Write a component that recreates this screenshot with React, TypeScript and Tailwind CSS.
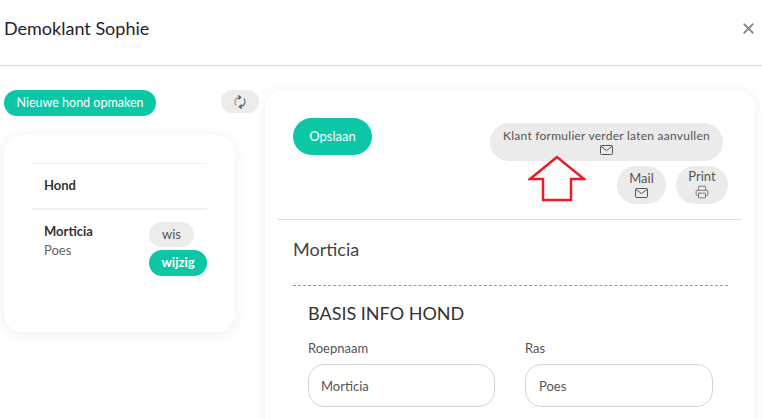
import React from 'react';
import { X, Printer } from 'lucide-react';

const MailIcon: React.FC = () => (
  <svg width="13" height="10" viewBox="0 0 13 10" fill="none" stroke="#555" strokeWidth="1" className="mt-[2px]">
    <rect x="0.5" y="0.5" width="12" height="9" rx="1" />
    <path d="M0.8 1.2 L6.5 5.6 L12.2 1.2" />
  </svg>
);

const SyncIcon: React.FC = () => (
  <svg width="12" height="14" viewBox="0 0 12 14" fill="none" strokeWidth="1.2">
    <path d="M2.2 10.4 A5 5 0 0 1 4.6 2.4" stroke="#c8893f" />
    <path d="M9.8 3.6 A5 5 0 0 1 7.4 11.6" stroke="#4a6ea8" />
    <path d="M4.2 0.6 L6.6 2.2 L4.4 4.2" stroke="#33415c" />
    <path d="M7.8 9.8 L5.4 11.8 L7.6 13.4" stroke="#33415c" />
  </svg>
);

const App: React.FC = () => {
  return (
    <div className="relative w-[762px] h-[419px] overflow-hidden bg-white font-['Lato','Noto_Sans',sans-serif] text-[#333]">
      <header className="h-[66px] border-b border-[#d9d9d9] flex items-center justify-between pl-[4px] pr-[5px]">
        <h1 className="text-[18px] text-[#1f2233] relative top-[-4px]">Demoklant Sophie</h1>
        <X className="w-[17px] h-[17px] text-[#8a8a8a] relative top-[-4px]" strokeWidth={2.5} />
      </header>

      <div className="flex pt-[24px] pl-[4px]">
        {/* linker kolom */}
        <div className="w-[255px] shrink-0">
          <div className="flex items-start justify-between">
            <button className="w-[152px] h-[26px] rounded-full bg-[#0cc7a6] text-white text-[12.5px]">Nieuwe hond opmaken</button>
            <button className="w-[38px] h-[23px] rounded-full bg-[#ececec] flex items-center justify-center">
              <SyncIcon />
            </button>
          </div>

          <div className="mt-[19px] w-[231px] h-[197px] rounded-[18px] bg-white shadow-[0_2px_14px_rgba(0,0,0,0.07)] px-[28px] pt-[28px]">
            <div className="border-t border-[#f0f0f0] h-[45px] pl-[12px] flex items-center">
              <span className="text-[13px] font-bold text-[#333]">Hond</span>
            </div>
            <div className="border-t-2 border-[#f0f0f0] flex justify-between pl-[12px] pt-[12px]">
              <div className="text-[13px] leading-[19px]">
                <div className="font-bold text-[#333]">Morticia</div>
                <div className="text-[#666]">Poes</div>
              </div>
              <div className="flex flex-col items-start w-[58px] gap-[3px]">
                <button className="w-[45px] h-[25px] rounded-full bg-[#ececec] text-[13px] text-[#555]">wis</button>
                <button className="w-[58px] h-[26px] rounded-full bg-[#0cc7a6] text-[13px] font-bold text-white">wijzig</button>
              </div>
            </div>
          </div>
        </div>

        {/* rechter kaart */}
        <div className="relative flex-1 ml-[6px] mr-[7px] h-[340px] rounded-t-[18px] bg-white shadow-[0_2px_14px_rgba(0,0,0,0.07)] px-[13px] pt-[28px]">
          <div className="h-[102px] border-b border-[#dedede] flex justify-between pl-[15px] pr-[14px]">
            <button className="w-[79px] h-[37px] rounded-full bg-[#0cc7a6] text-white text-[13px]">Opslaan</button>
            <div className="flex flex-col items-end pt-[5px] gap-[5px]">
              <button className="w-[233px] h-[38px] rounded-full bg-[#ebebeb] text-[12px] leading-[14px] text-[#555] flex flex-col items-center justify-center mr-[5px] tracking-[0.25px]">
                Klant formulier verder laten aanvullen
                <MailIcon />
              </button>
              <div className="flex gap-[10px]">
                <button className="w-[49px] h-[38px] rounded-full bg-[#ebebeb] text-[13px] leading-[15px] text-[#555] flex flex-col items-center justify-center pb-[2px]">
                  Mail
                  <MailIcon />
                </button>
                <button className="w-[52px] h-[38px] rounded-full bg-[#ebebeb] text-[13px] leading-[15px] text-[#555] flex flex-col items-center justify-center pb-[2px]">
                  Print
                  <Printer className="w-[14px] h-[14px] mt-[1px]" strokeWidth={1.25} />
                </button>
              </div>
            </div>
          </div>

          <div className="pl-[15px] pr-[14px]">
            <h2 className="text-[18px] leading-[22px] text-[#444] mt-[18px]">Morticia</h2>
            <div className="border-t border-dashed border-[#999] mt-[25px]" />
            <div className="pl-[15px] pt-[16px]">
              <h3 className="text-[18px] leading-[22px] text-[#333]">BASIS INFO HOND</h3>
              <div className="flex gap-[30px] mt-[16px]">
                <label className="w-[187px] text-[13px] leading-[16px] text-[#555]">
                  Roepnaam
                  <div className="mt-[8px] h-[43px] rounded-[16px] border border-[#d4d4d4] flex items-center pl-[12px]">Morticia</div>
                </label>
                <label className="w-[188px] text-[13px] leading-[16px] text-[#555]">
                  Ras
                  <div className="mt-[8px] h-[43px] rounded-[16px] border border-[#d4d4d4] flex items-center pl-[13px]">Poes</div>
                </label>
              </div>
            </div>
          </div>
        </div>
      </div>

      {/* rode pijl bovenop */}
      <svg className="absolute left-[528px] top-[155px]" width="58" height="48" viewBox="0 0 58 48" fill="white">
        <path d="M29 2 L2 24 H15 V45 H43 V24 H56 Z" stroke="#ed1c24" strokeWidth="2.5" strokeLinejoin="miter" />
      </svg>
    </div>
  );
};

export default App;
